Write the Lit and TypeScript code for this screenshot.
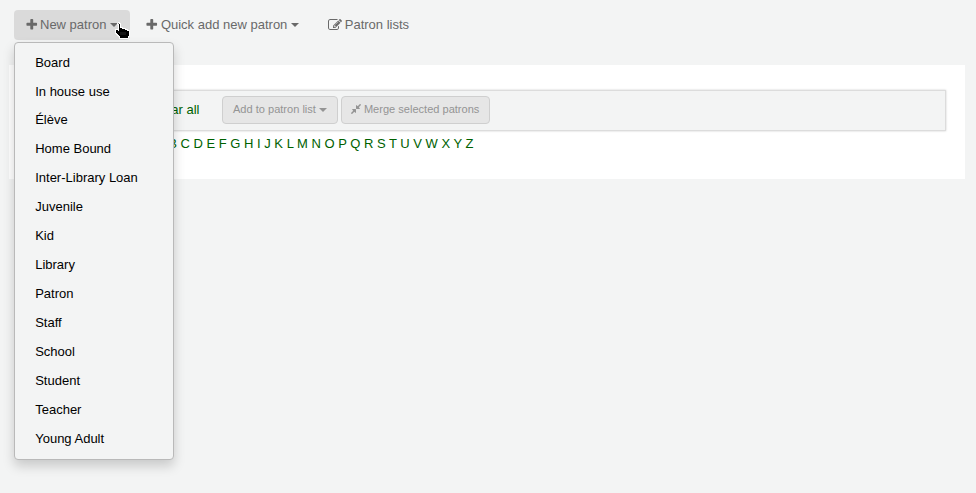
import { LitElement, html, css, svg } from "lit";
import { customElement } from "lit/decorators.js";

const paths = {
  plus: "M1600 736v192q0 40-28 68t-68 28h-416v416q0 40-28 68t-68 28h-192q-40 0-68-28t-28-68v-416h-416q-40 0-68-28t-28-68v-192q0-40 28-68t68-28h416v-416q0-40 28-68t68-28h192q40 0 68 28t28 68v416h416q40 0 68 28t28 68z",
  edit: "M888 1184l116-116-152-152-116 116v56h96v96h56zm440-720q-16-16-33 1l-350 350q-17 17-1 33t33-1l350-350q17-17 1-33zm80 594v190q0 119-84.5 203.5t-203.5 84.5h-832q-119 0-203.5-84.5t-84.5-203.5v-832q0-119 84.5-203.5t203.5-84.5h832q63 0 117 25 15 7 18 23 3 17-9 29l-49 49q-14 14-32 8-23-6-45-6h-832q-66 0-113 47t-47 113v832q0 66 47 113t113 47h832q66 0 113-47t47-113v-126q0-13 9-22l64-64q15-15 35-7t20 29zm-96-738l288 288-672 672h-288v-288zm444 132l-92 92-288-288 92-92q28-28 68-28t68 28l152 152q28 28 28 68t-28 68z",
  compress: "M896 960v448q0 26-19 45t-45 19-45-19l-144-144-332 332q-10 10-23 10t-23-10l-114-114q-10-10-10-23t10-23l332-332-144-144q-19-19-19-45t19-45 45-19h448q26 0 45 19t19 45zm755-672q0 13-10 23l-332 332 144 144q19 19 19 45t-19 45-45 19h-448q-26 0-45-19t-19-45v-448q0-26 19-45t45-19 45 19l144 144 332-332q10-10 23-10t23 10l114 114q10 10 10 23z",
};

const icon = (name: keyof typeof paths) =>
  html`<svg class="icon ${name}" viewBox="0 0 1792 1792">${svg`<path d=${paths[name]} />`}</svg>`;

const categories = [
  "Board", "In house use", "Élève", "Home Bound", "Inter-Library Loan", "Juvenile", "Kid",
  "Library", "Patron", "Staff", "School", "Student", "Teacher", "Young Adult",
];
const letters = [..."ABCDEFGHIJKLMNOPQRSTUVWXYZ"];

@customElement("app-root")
export class AppRoot extends LitElement {
  static styles = css`
    :host {
      display: block;
      height: 493px;
      overflow: hidden;
      background: #f3f4f4;
      font: 13px/18px "Liberation Sans", Arial, sans-serif;
      color: #000;
    }
    * { box-sizing: border-box; }
    .toolbar { display: flex; padding: 10px 0 0 14px; height: 65px; align-items: flex-start; }
    .group { position: relative; margin-right: 4.8px; }
    .btn {
      display: flex; align-items: center; height: 30px; padding: 0 12px;
      border-radius: 4px; color: #696969; white-space: pre;
    }
    .open .btn { background: #dadada; }
    .icon { width: 13px; height: 13px; fill: currentColor; flex: none; }
    .btn .plus { width: 13.5px; height: 13.5px; margin: 0 2px 1.5px -1.5px; }
    .btn .edit { width: 14px; height: 14px; margin-right: 3px; }
    .caret {
      border: 4px solid transparent; border-top-color: currentColor; border-bottom: 0;
      margin-left: 3.6px; flex: none;
    }
    .menu {
      position: absolute; top: 32px; left: 0; width: 160px; height: 418px;
      margin: 0; padding: 5px 0; list-style: none; z-index: 2;
      background: #f3f4f4; border: 1px solid #b9b9b9;
      border-radius: 4px; box-shadow: 0 6px 12px rgba(0, 0, 0, 0.175);
    }
    .menu li { height: 29px; line-height: 29px; padding-left: 20.2px; }
    .menu li:nth-child(2) { height: 28px; }
    .pointer { position: absolute; left: 100px; top: 12px; width: 17px; height: 17px; z-index: 3; }
    .panel { margin: 0 11px 0 9px; height: 114px; padding: 25px 19px 0 20px; background: #fff; }
    .results {
      display: flex; align-items: flex-start; height: 41px; padding: 5px 10px;
      background: #f3f4f4; border: 1px solid #dcdcdc; box-shadow: 0 0 2px #ccc;
    }
    .link { color: #006100; }
    .select { width: 159.5px; margin-right: 22.5px; text-align: right; line-height: 27px; white-space: nowrap; }
    .action {
      display: flex; align-items: center; height: 28px; padding: 0 10px 2px; white-space: pre;
      font-size: 11.05px; color: #949494; background: #e6e6e6;
      border: 1px solid #cfcfcf; border-radius: 4px; margin-right: 3px;
    }
    .action .caret { margin: 2px 0 0 3px; }
    .action .icon { width: 12px; height: 12px; margin: 0 2px 0 -2px; }
    .browse { padding-top: 4px; width: 444.5px; text-align: right; white-space: nowrap; }
  `;

  render() {
    return html`
      <nav class="toolbar">
        <div class="group open">
          <div class="btn">${icon("plus")}New patron<i class="caret"></i></div>
          <ul class="menu">${categories.map((c) => html`<li>${c}</li>`)}</ul>
          <svg class="pointer" viewBox="0 0 17 17">
            <path
              d="M4 2h2v4h2v1h3v1h2v1h2v5h-1v2h-8v-2h-1v-1h-1v-1h-1v-1h-1v-3h2v1h1v-8z"
              fill="#000" stroke="#fff" stroke-width="2" stroke-linejoin="round" paint-order="stroke"
            />
            <path d="M7 10v3M9 10v3M11 10v3" fill="none" stroke="#444" stroke-width="0.6" />
          </svg>
        </div>
        <div class="group"><div class="btn">${icon("plus")}Quick add new patron<i class="caret"></i></div></div>
        <div class="group"><div class="btn">${icon("edit")}Patron lists</div></div>
      </nav>
      <main class="panel">
        <div class="results">
          <div class="select link">Select all | Clear all</div>
          <div class="action">Add to patron list<i class="caret"></i></div>
          <div class="action">${icon("compress")}Merge selected patrons</div>
        </div>
        <div class="browse link">${letters.join(" ")}</div>
      </main>
    `;
  }
}
